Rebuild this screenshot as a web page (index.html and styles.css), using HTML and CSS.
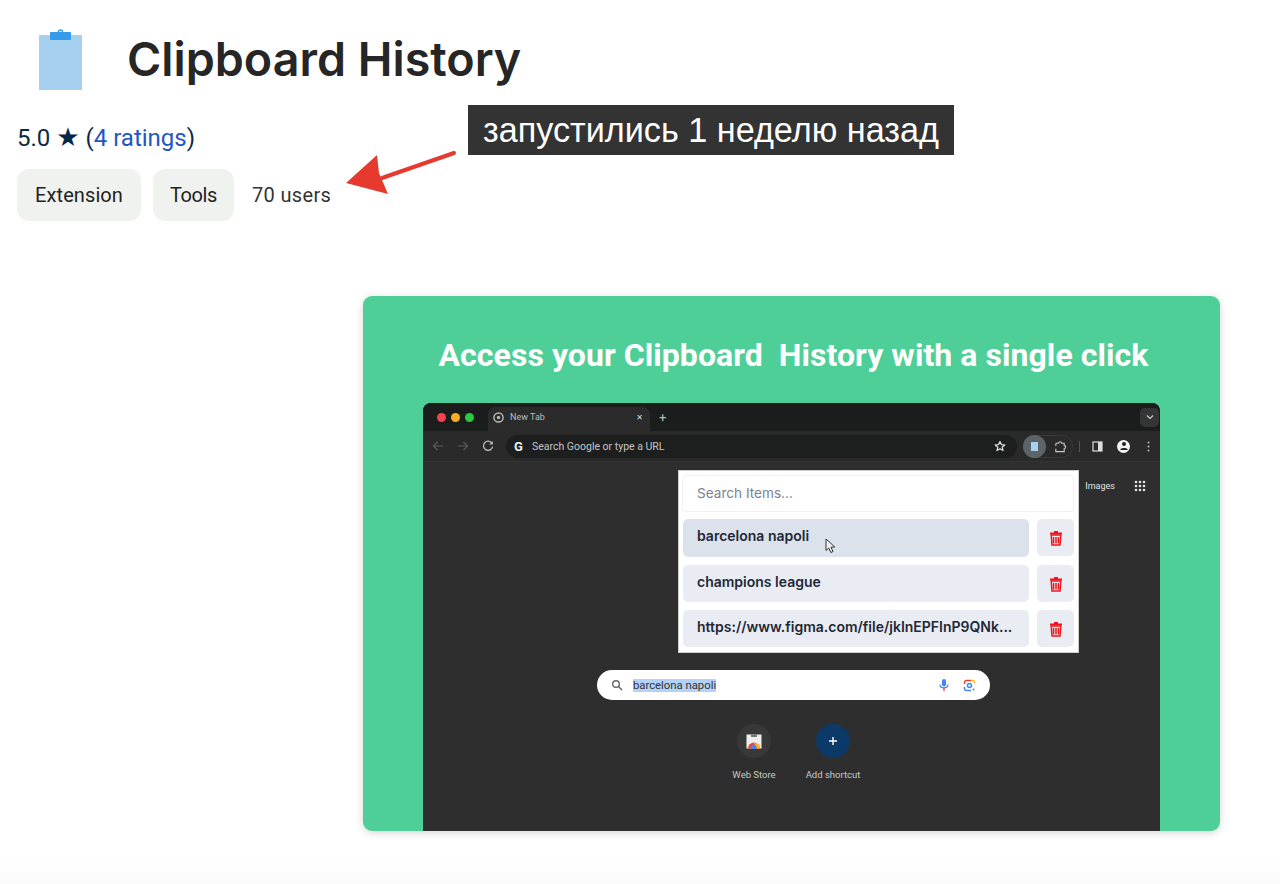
FILE: index.html
```html
<!DOCTYPE html>
<html lang="en">
  <head>
    <meta charset="UTF-8" />
    <title>Clipboard History</title>
    <link rel="stylesheet" href="styles.css">
  </head>
  <body>
    <div class="page">
      <header class="ext-header">
        <svg class="ext-icon" width="44" height="62" viewBox="0 0 44 62">
          <rect x="1" y="6" width="43" height="55" fill="#a6d0ef" />
          <rect x="12" y="3" width="21" height="8" rx="1" fill="#339bea" />
          <circle cx="22.5" cy="3" r="2" fill="none" stroke="#339bea" stroke-width="1.5" />
        </svg>
        <h1>Clipboard History</h1>
      </header>

      <div class="rating">
        5.0 <span class="star">★</span> (<a href="#">4 ratings</a>)
      </div>
      <div class="meta">
        <span class="chip chip-ext">Extension</span>
        <span class="chip chip-tools">Tools</span>
        <span class="users">70 users</span>
      </div>

      <div class="note">запустились 1 неделю назад</div>
      <svg class="note-arrow" width="116" height="56" viewBox="0 0 116 56">
        <path d="M110 13 L38 38" stroke="#e63a2e" stroke-width="4" stroke-linecap="round" />
        <path d="M2 43 L33 15 L35 33 L44 54 Z" fill="#e63a2e" />
      </svg>

      <section class="shot">
        <h2>Access your Clipboard&nbsp; History with a single click</h2>
        <div class="browser">
          <div class="tabstrip">
            <div class="lights">
              <i class="light red"></i><i class="light yellow"></i><i class="light green"></i>
            </div>
            <div class="tab">
              <svg width="11" height="11" viewBox="0 0 12 12">
                <circle cx="6" cy="6" r="5" fill="none" stroke="#b8b8b8" stroke-width="1.6" />
                <circle cx="6" cy="6" r="1.8" fill="#b8b8b8" />
              </svg>
              <span class="tab-title">New Tab</span>
              <span class="tab-close">✕</span>
            </div>
            <span class="tab-plus">+</span>
            <div class="tab-menu">
              <svg width="8" height="6" viewBox="0 0 8 6"><path d="M1 1.5 L4 4.5 L7 1.5" fill="none" stroke="#ccc" stroke-width="1.2" /></svg>
            </div>
          </div>

          <div class="toolbar">
            <svg class="nav" width="12" height="12" viewBox="0 0 12 12"><path d="M11 6 H2 M5.5 2 L1.5 6 L5.5 10" fill="none" stroke="#5c5c5c" stroke-width="1.2" /></svg>
            <svg class="nav" width="12" height="12" viewBox="0 0 12 12"><path d="M1 6 H10 M6.5 2 L10.5 6 L6.5 10" fill="none" stroke="#5c5c5c" stroke-width="1.2" /></svg>
            <svg class="nav reload" width="12" height="12" viewBox="0 0 12 12"><path d="M10 3.4 A4.6 4.6 0 1 0 10.6 6.6" fill="none" stroke="#bbb" stroke-width="1.3" /><path d="M10.8 1 V4.6 H7.2 Z" fill="#bbb" /></svg>
            <div class="omnibox">
              <span class="g-mark">G</span>
              <span class="omni-text">Search Google or type a URL</span>
              <svg class="omni-star" width="12" height="12" viewBox="0 0 24 24"><path d="M12 3 L14.8 9.2 L21.5 9.9 L16.4 14.4 L17.9 21 L12 17.6 L6.1 21 L7.6 14.4 L2.5 9.9 L9.2 9.2 Z" fill="none" stroke="#ddd" stroke-width="2.6" stroke-linejoin="round" /></svg>
            </div>
            <div class="ext-pill">
              <span class="ext-active"><i class="mini-clip"></i></span>
              <svg width="13" height="13" viewBox="0 0 14 14"><path d="M2 3.5 H5 A1.6 1.6 0 0 1 8.2 3.5 H11 V6 A1.6 1.6 0 0 1 11 9.2 V12.5 H2 V9.5 M2 6.5 V3.5" fill="none" stroke="#c8c8c8" stroke-width="1.2" /></svg>
            </div>
            <i class="tool-sep"></i>
            <svg width="11" height="11" viewBox="0 0 11 11"><rect x="1" y="1" width="9" height="9" fill="none" stroke="#ddd" stroke-width="1.2" /><rect x="6" y="1" width="4" height="9" fill="#ddd" /></svg>
            <span class="avatar">
              <svg width="10" height="10" viewBox="0 0 10 10"><circle cx="5" cy="3" r="2" fill="#222" /><path d="M1.2 9 C1.4 6.4 8.6 6.4 8.8 9 Z" fill="#222" /></svg>
            </span>
            <svg class="kebab" width="3" height="11" viewBox="0 0 3 11"><circle cx="1.5" cy="1.5" r="1" fill="#bbb" /><circle cx="1.5" cy="5.5" r="1" fill="#bbb" /><circle cx="1.5" cy="9.5" r="1" fill="#bbb" /></svg>
          </div>

          <div class="newtab">
            <div class="ntp-top">
              <span>Images</span>
              <svg width="12" height="12" viewBox="0 0 12 12" fill="#e4e4e4">
                <circle cx="2" cy="2" r="1.3" /><circle cx="6" cy="2" r="1.3" /><circle cx="10" cy="2" r="1.3" />
                <circle cx="2" cy="6" r="1.3" /><circle cx="6" cy="6" r="1.3" /><circle cx="10" cy="6" r="1.3" />
                <circle cx="2" cy="10" r="1.3" /><circle cx="6" cy="10" r="1.3" /><circle cx="10" cy="10" r="1.3" />
              </svg>
            </div>

            <div class="ntp-search">
              <svg width="12" height="12" viewBox="0 0 12 12"><circle cx="5" cy="5" r="3.3" fill="none" stroke="#666" stroke-width="1.4" /><path d="M7.5 7.5 L11 11" stroke="#666" stroke-width="1.5" /></svg>
              <span class="selected">barcelona napoli</span>
              <svg class="mic" width="10" height="14" viewBox="0 0 10 14">
                <rect x="3" y="1" width="4" height="7.5" rx="2" fill="#4285f4" />
                <path d="M1 6.5 C1 11 9 11 9 6.5" fill="none" stroke="#4285f4" stroke-width="1.2" />
                <path d="M5 10 V13" stroke="#ea4335" stroke-width="1.3" />
              </svg>
              <svg class="lens" width="13" height="13" viewBox="0 0 13 13" fill="none" stroke-width="1.5">
                <path d="M1.5 5 V3.5 A2 2 0 0 1 3.5 1.5 H8" stroke="#ea4335" />
                <path d="M8 1.5 H9.5 A2 2 0 0 1 11.5 3.5 V4" stroke="#fbbc04" />
                <path d="M1.5 8 V9.5 A2 2 0 0 0 3.5 11.5 H8" stroke="#4285f4" />
                <circle cx="6.5" cy="6.5" r="2" stroke="#4285f4" />
                <circle cx="10.5" cy="10.5" r="1" fill="#34a853" stroke="none" />
              </svg>
            </div>

            <div class="shortcuts">
              <div class="shortcut">
                <span class="shortcut-circle">
                  <svg width="16" height="15" viewBox="0 0 16 15">
                    <rect x="0.5" y="0.5" width="15" height="14" fill="#eee" />
                    <rect x="5" y="0.5" width="6" height="2.5" fill="#777" />
                    <path d="M2 14.5 A6 6 0 0 1 14 14.5 Z" fill="#e8453c" />
                    <path d="M8 9 A5.5 5.5 0 0 1 14 14.5 H11 Z" fill="#fbbc04" />
                    <circle cx="8" cy="13" r="2.4" fill="#4285f4" />
                  </svg>
                </span>
                <span class="shortcut-label">Web Store</span>
              </div>
              <div class="shortcut">
                <span class="shortcut-circle add">
                  <svg width="10" height="10" viewBox="0 0 10 10"><path d="M5 1 V9 M1 5 H9" stroke="#fff" stroke-width="1.4" /></svg>
                </span>
                <span class="shortcut-label">Add shortcut</span>
              </div>
            </div>

            <div class="popup">
              <div class="popup-search">Search Items...</div>
              <div class="popup-row">
                <div class="popup-item hovered">barcelona napoli</div>
                <button class="popup-del">
                  <svg width="14" height="16" viewBox="0 0 14 16"><use href="#trash" /></svg>
                </button>
              </div>
              <div class="popup-row">
                <div class="popup-item">champions league</div>
                <button class="popup-del">
                  <svg width="14" height="16" viewBox="0 0 14 16"><use href="#trash" /></svg>
                </button>
              </div>
              <div class="popup-row">
                <div class="popup-item">https://www.figma.com/file/jkInEPFInP9QNk...</div>
                <button class="popup-del">
                  <svg width="14" height="16" viewBox="0 0 14 16"><use href="#trash" /></svg>
                </button>
              </div>
              <svg class="cursor" width="11" height="16" viewBox="0 0 11 16"><path d="M1 1 V12.5 L3.8 10 L5.8 14.5 L8 13.5 L6 9.2 L9.8 9 Z" fill="#eef0f3" stroke="#333" stroke-width="1" /></svg>
            </div>
          </div>
        </div>
      </section>
    </div>

    <svg width="0" height="0" class="defs">
      <symbol id="trash" viewBox="0 0 14 16">
        <path d="M5 1 H9 V2.5 H13 V4.5 H1 V2.5 H5 Z" fill="#f0141e" />
        <path d="M2.2 5 H11.8 L11 15 H3 Z M4.6 7 V13.4 M7 7 V13.4 M9.4 7 V13.4" fill="none" stroke="#f0141e" stroke-width="1.5" />
      </symbol>
    </svg>
  </body>
</html>
```

FILE: styles.css
```css
html,
body {
  margin: 0;
  height: 884px;
  overflow: hidden;
}
body {
  background: linear-gradient(#fff 860px, #fafafa 884px);
  font-family: "Inter", "Liberation Sans", sans-serif;
}
.page {
  position: relative;
  padding-left: 17px;
}
.defs {
  position: absolute;
}

/* store listing header */
.ext-header {
  display: flex;
  align-items: center;
  height: 118px;
  padding-left: 21px;
}
.ext-icon {
  margin-top: 1px;
}
h1 {
  margin: 0 0 0 45px;
  font-family: "Inter", sans-serif;
  font-size: 46.6px;
  font-weight: 600;
  color: #262626;
}
.rating {
  margin-top: 6px;
  height: 29px;
  line-height: 29px;
  font-family: "Roboto", sans-serif;
  font-size: 24px;
  color: #0c2a46;
}
.rating a {
  color: #1f56c4;
  text-decoration: none;
}
.star {
  font-family: "DejaVu Sans", sans-serif;
  font-size: 26px;
  line-height: 20px;
  color: #06274a;
}
.meta {
  display: flex;
  align-items: center;
  gap: 12px;
  margin-top: 16px;
  font-family: "Roboto", sans-serif;
  font-size: 20px;
  color: #222;
}
.chip {
  display: flex;
  align-items: center;
  height: 52px;
  padding: 0 18px;
  border-radius: 12px;
  background: #f0f2f0;
}
.chip-ext {
  letter-spacing: 0.1px;
}
.chip-tools {
  padding: 0 17px;
  letter-spacing: -0.4px;
}
.users {
  margin-left: 6px;
  letter-spacing: 0.35px;
  color: #333;
}

/* annotation over the page */
.note {
  position: absolute;
  left: 468px;
  top: 105px;
  width: 486px;
  height: 50px;
  line-height: 50px;
  text-align: center;
  background: #333;
  color: #fff;
  font-family: "Liberation Sans", sans-serif;
  font-size: 34.2px;
  white-space: nowrap;
}
.note-arrow {
  position: absolute;
  left: 344px;
  top: 140px;
}

/* promo card */
.shot {
  width: 857px;
  height: 535px;
  margin: 75px 0 0 346px;
  border-radius: 9px;
  background: #4fcf98;
  box-shadow: 0 2px 9px rgba(0, 0, 0, 0.16);
  display: flex;
  flex-direction: column;
  align-items: center;
}
h2 {
  margin: 39px 0 28px 4px;
  height: 40px;
  line-height: 40px;
  font-family: "Roboto", sans-serif;
  font-size: 32px;
  font-weight: 700;
  letter-spacing: 0.06px;
  color: #fff;
  white-space: nowrap;
}
.browser {
  width: 737px;
  flex: 1;
  display: flex;
  flex-direction: column;
  border-radius: 8px 8px 0 0;
  overflow: hidden;
  background: #2e2e2e;
  font-family: "Roboto", sans-serif;
}

/* browser chrome */
.tabstrip {
  display: flex;
  align-items: flex-end;
  height: 28px;
  background: #1b1d1c;
}
.lights {
  display: flex;
  gap: 5px;
  align-self: center;
  padding: 0 14px;
}
.light {
  width: 9px;
  height: 9px;
  border-radius: 50%;
}
.red {
  background: #f2434f;
}
.yellow {
  background: #f6b026;
}
.green {
  background: #2bc840;
}
.tab {
  display: flex;
  align-items: center;
  gap: 6px;
  width: 162px;
  height: 24px;
  margin-left: 0;
  padding: 0 7px 4px 5px;
  box-sizing: border-box;
  border-radius: 7px 7px 0 0;
  background: #2b2b2b;
  color: #bdbdbd;
  font-size: 9px;
}
.tab-title {
  flex: 1;
}
.tab-close {
  color: #ddd;
  font-family: "DejaVu Sans", sans-serif;
  font-size: 8px;
}
.tab-plus {
  align-self: center;
  margin-left: 9px;
  color: #bbb;
  font-size: 13px;
}
.tab-menu {
  display: flex;
  align-items: center;
  justify-content: center;
  align-self: center;
  width: 19px;
  height: 19px;
  margin-left: auto;
  margin-right: 1px;
  border-radius: 5px;
  background: #353535;
}
.toolbar {
  display: flex;
  align-items: center;
  height: 31px;
  padding: 0 9px 0 9px;
  box-sizing: border-box;
  background: #2a2a2a;
  border-bottom: 1px solid #333;
}
.nav {
  margin-right: 13px;
}
.reload {
  margin-left: 0;
  margin-right: 12px;
}
.omnibox {
  display: flex;
  align-items: center;
  width: 511px;
  height: 23px;
  padding: 0 11px 0 5px;
  box-sizing: border-box;
  border-radius: 12px;
  background: #1d1f1f;
  color: #c4c4c4;
  font-size: 10.5px;
}
.g-mark {
  width: 15px;
  margin-right: 6px;
  text-align: center;
  color: #eee;
  font-size: 13px;
  font-weight: 700;
}
.omni-text {
  flex: 1;
}
.ext-pill {
  display: flex;
  align-items: center;
  gap: 8px;
  width: 50px;
  height: 23px;
  margin-left: 6px;
  box-sizing: border-box;
  border-radius: 12px;
  border: 1px solid #3a3a3a;
}
.ext-active {
  display: flex;
  align-items: center;
  justify-content: center;
  width: 23px;
  height: 23px;
  margin-left: -1px;
  border-radius: 50%;
  background: #5d6469;
}
.mini-clip {
  width: 7px;
  height: 9px;
  background: #a6d0ef;
}
.tool-sep {
  width: 1px;
  height: 11px;
  margin: 0 12px 0 6px;
  background: #555;
}
.avatar {
  display: flex;
  align-items: center;
  justify-content: center;
  width: 13px;
  height: 13px;
  margin-left: 14px;
  border-radius: 50%;
  background: #f2f2f2;
}
.kebab {
  margin-left: 17px;
}

/* new tab page */
.newtab {
  position: relative;
  flex: 1;
}
.ntp-top {
  display: flex;
  align-items: center;
  justify-content: flex-end;
  gap: 19px;
  height: 16px;
  padding: 16px 14px 0 0;
  color: #e4e4e4;
  font-size: 9px;
}
.ntp-search {
  display: flex;
  align-items: center;
  width: 393px;
  height: 30px;
  margin: 176px 0 0 174px;
  padding: 0 14px;
  box-sizing: border-box;
  border-radius: 15px;
  background: #fff;
  color: #333;
  font-size: 11.3px;
}
.selected {
  margin-left: 10px;
  background: #b4d2f7;
  flex: none;
}
.mic {
  margin-left: auto;
}
.lens {
  margin-left: 14px;
}
.shortcuts {
  display: flex;
  justify-content: center;
  gap: 24px;
  margin: 24px 0 0 4px;
}
.shortcut {
  display: flex;
  flex-direction: column;
  align-items: center;
  width: 55px;
  color: #c9c9c9;
  font-size: 9.5px;
  white-space: nowrap;
}
.shortcut-circle {
  display: flex;
  align-items: center;
  justify-content: center;
  width: 34px;
  height: 34px;
  border-radius: 50%;
  background: #383838;
}
.add {
  background: #0c3a68;
}
.shortcut-label {
  margin-top: 11px;
}

/* extension popup, over the new tab page */
.popup {
  position: absolute;
  left: 255px;
  top: 8px;
  width: 401px;
  height: 183px;
  padding: 4px 4px;
  box-sizing: border-box;
  background: #fff;
  border: 1px solid #ccc;
  font-family: "Inter", sans-serif;
}
.popup-search {
  height: 37px;
  line-height: 35px;
  padding-left: 14px;
  margin: 0 0 7px -1px;
  box-sizing: border-box;
  border: 1px solid #eef0f3;
  border-radius: 4px;
  color: #7a8291;
  font-size: 13.6px;
}
.popup-row {
  display: flex;
  gap: 8px;
  margin-bottom: 8px;
}
.popup-item {
  width: 346px;
  height: 37px;
  line-height: 34px;
  padding-left: 14px;
  box-sizing: border-box;
  border-radius: 5px;
  background: #e9edf3;
  color: #222835;
  font-size: 14px;
  font-weight: 600;
  white-space: nowrap;
}
.hovered {
  height: 38px;
  background: #dbe2ec;
}
.popup-del {
  display: flex;
  align-items: center;
  justify-content: center;
  width: 37px;
  height: 37px;
  padding: 0;
  border: none;
  border-radius: 5px;
  background: #e9edf3;
}
.cursor {
  position: absolute;
  left: 146px;
  top: 67px;
}
```
